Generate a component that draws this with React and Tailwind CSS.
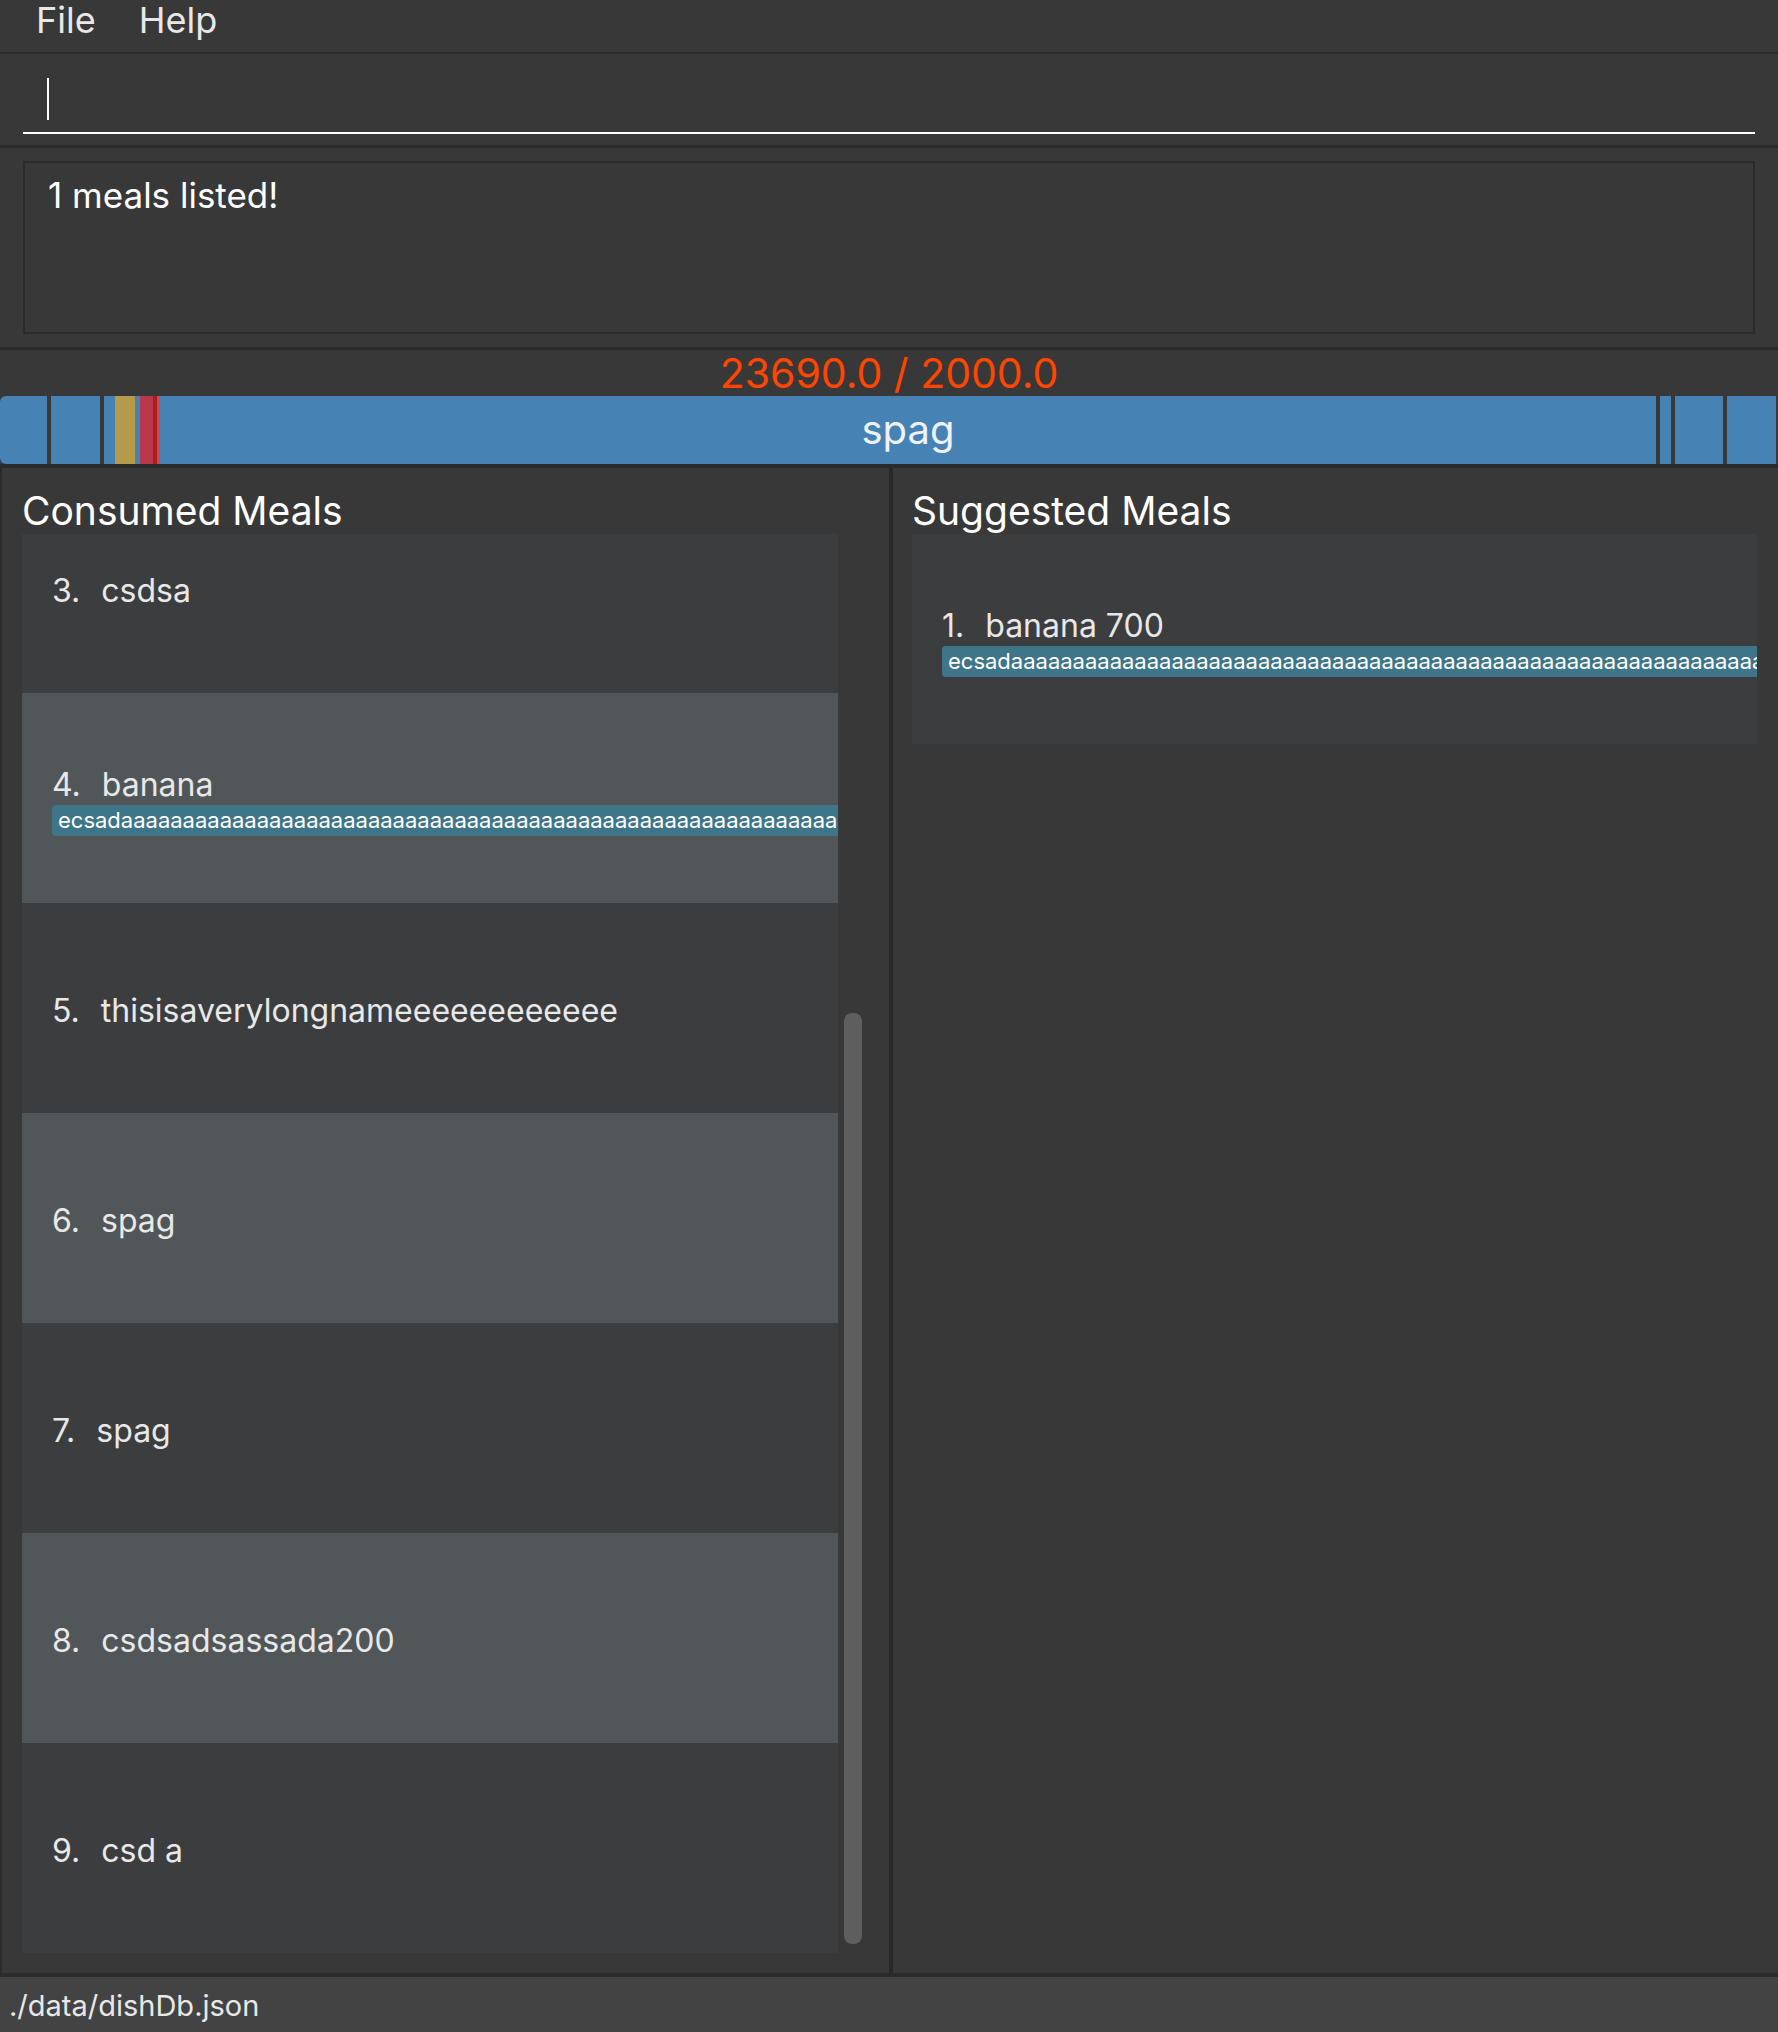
import React from "react";

const BAR = [
  { w: 47, color: "#4682b4", round: "l" },
  { w: 4, color: "#383838" },
  { w: 49, color: "#4682b4" },
  { w: 4, color: "#383838" },
  { w: 11, color: "#4682b4" },
  { w: 20, color: "#b59a4a" },
  { w: 5, color: "#4682b4" },
  { w: 13, color: "#b9384b" },
  { w: 4, color: "#b01c1c" },
  { w: 3, color: "#c84a5a" },
  { w: 1496, color: "#4682b4", label: "spag" },
  { w: 4, color: "#383838" },
  { w: 11, color: "#4682b4" },
  { w: 4, color: "#383838" },
  { w: 48, color: "#4682b4" },
  { w: 4, color: "#383838" },
  { w: 49, color: "#4682b4" },
];

const TAG_TEXT = "ecsada" + "a".repeat(90);

const CONSUMED = [
  { id: 3, name: "csdsa" },
  { id: 4, name: "banana", tag: TAG_TEXT },
  { id: 5, name: "thisisaverylongnameeeeeeeeeeee" },
  { id: 6, name: "spag" },
  { id: 7, name: "spag" },
  { id: 8, name: "csdsadsassada200" },
  { id: 9, name: "csd a" },
];

function MealRow({ meal, even }) {
  return (
    <div
      className={`flex h-[210px] w-full shrink-0 flex-col justify-center overflow-hidden pl-[30px] pt-[5px] ${
        even ? "bg-[#515658]" : "bg-[#3c3d3f]"
      }`}
    >
      <div className="flex gap-[21px] whitespace-nowrap text-[32px] leading-[40px] text-[#e8e8e8]">
        <span>{meal.id}.</span>
        <span>{meal.name}</span>
      </div>
      {meal.tag && (
        <div className="flex">
          <span className="h-[31px] whitespace-nowrap rounded-[4px] bg-[#3e7588] pl-[6px] pr-[6px] text-[22px] leading-[31px] text-white">
            {meal.tag}
          </span>
        </div>
      )}
    </div>
  );
}

export default function App() {
  return (
    <div className="flex h-[2032px] w-[1778px] flex-col overflow-hidden bg-[#383838] font-['Inter',sans-serif] text-white">
      {/* menu bar */}
      <div className="flex h-[54px] shrink-0 gap-[43px] border-b-2 border-[#2b2b2b] pl-[36px] pt-[1px] text-[36px] leading-[38px] text-[#e8e8e8]">
        <span>File</span>
        <span>Help</span>
      </div>

      {/* command box */}
      <div className="h-[94px] shrink-0 border-b-[3px] border-[#2b2b2b] px-[23px] pt-[6px]">
        <div className="flex h-[74px] items-end border-b-2 border-white pb-[12px] pl-[24px]">
          <div className="h-[42px] w-[2px] bg-white" />
        </div>
      </div>

      {/* result display */}
      <div className="h-[202px] shrink-0 border-b-[3px] border-[#2b2b2b] px-[23px] pt-[13px]">
        <div className="h-[173px] border-2 border-[#2b2b2b] pl-[23px] pt-[12px] text-[35px] leading-[41px] text-white">
          1 meals listed!
        </div>
      </div>

      {/* calorie text */}
      <div className="h-[46px] shrink-0 text-center text-[41px] leading-[46px] text-[#ff4500]">
        23690.0 / 2000.0
      </div>

      {/* calorie bar */}
      <div className="flex h-[68px] shrink-0">
        {BAR.map((s, i) => (
          <div
            key={i}
            className={`flex h-full shrink-0 items-center justify-center ${
              s.round === "l" ? "rounded-l-[6px]" : ""
            }`}
            style={{ width: s.w, backgroundColor: s.color }}
          >
            {s.label && (
              <span className="text-[40px] leading-[48px] text-[#eef2f7]">{s.label}</span>
            )}
          </div>
        ))}
      </div>

      {/* panels */}
      <div className="flex min-h-0 flex-1 border-t-4 border-[#2b2b2b]">
        <div className="flex w-[889px] shrink-0 flex-col border-l-2 border-[#2b2b2b] pb-[19px] pl-[20px] pt-[21px]">
          <div className="text-[39px] leading-[43px] text-white">Consumed Meals</div>
          <div className="mt-[2px] flex min-h-0 flex-1">
            <div className="flex w-[816px] flex-col overflow-hidden">
              <div className="-mt-[51px] flex flex-col">
                {CONSUMED.map((m) => (
                  <MealRow key={m.id} meal={m} even={m.id % 2 === 0} />
                ))}
              </div>
            </div>
            <div className="flex w-[30px] flex-col justify-end px-[6px] pb-[10px]">
              <div className="h-[931px] rounded-[8px] bg-[#5e5e5e]" />
            </div>
          </div>
        </div>

        <div className="w-[4px] shrink-0 bg-[#282828]" />

        <div className="flex min-w-0 flex-1 flex-col pl-[19px] pr-[21px] pt-[21px]">
          <div className="text-[39px] leading-[43px] text-white">Suggested Meals</div>
          <div className="mt-[2px] flex w-full min-w-0 flex-col overflow-hidden">
            <MealRow meal={{ id: 1, name: "banana 700", tag: TAG_TEXT }} even={false} />
          </div>
        </div>
      </div>

      {/* status bar */}
      <div className="h-[59px] shrink-0 border-t-4 border-[#2b2b2b] bg-[#434343] pl-[9px] pt-[5px] text-[29px] leading-[48px] text-[#e8e8e8]">
        ./data/dishDb.json
      </div>
    </div>
  );
}
